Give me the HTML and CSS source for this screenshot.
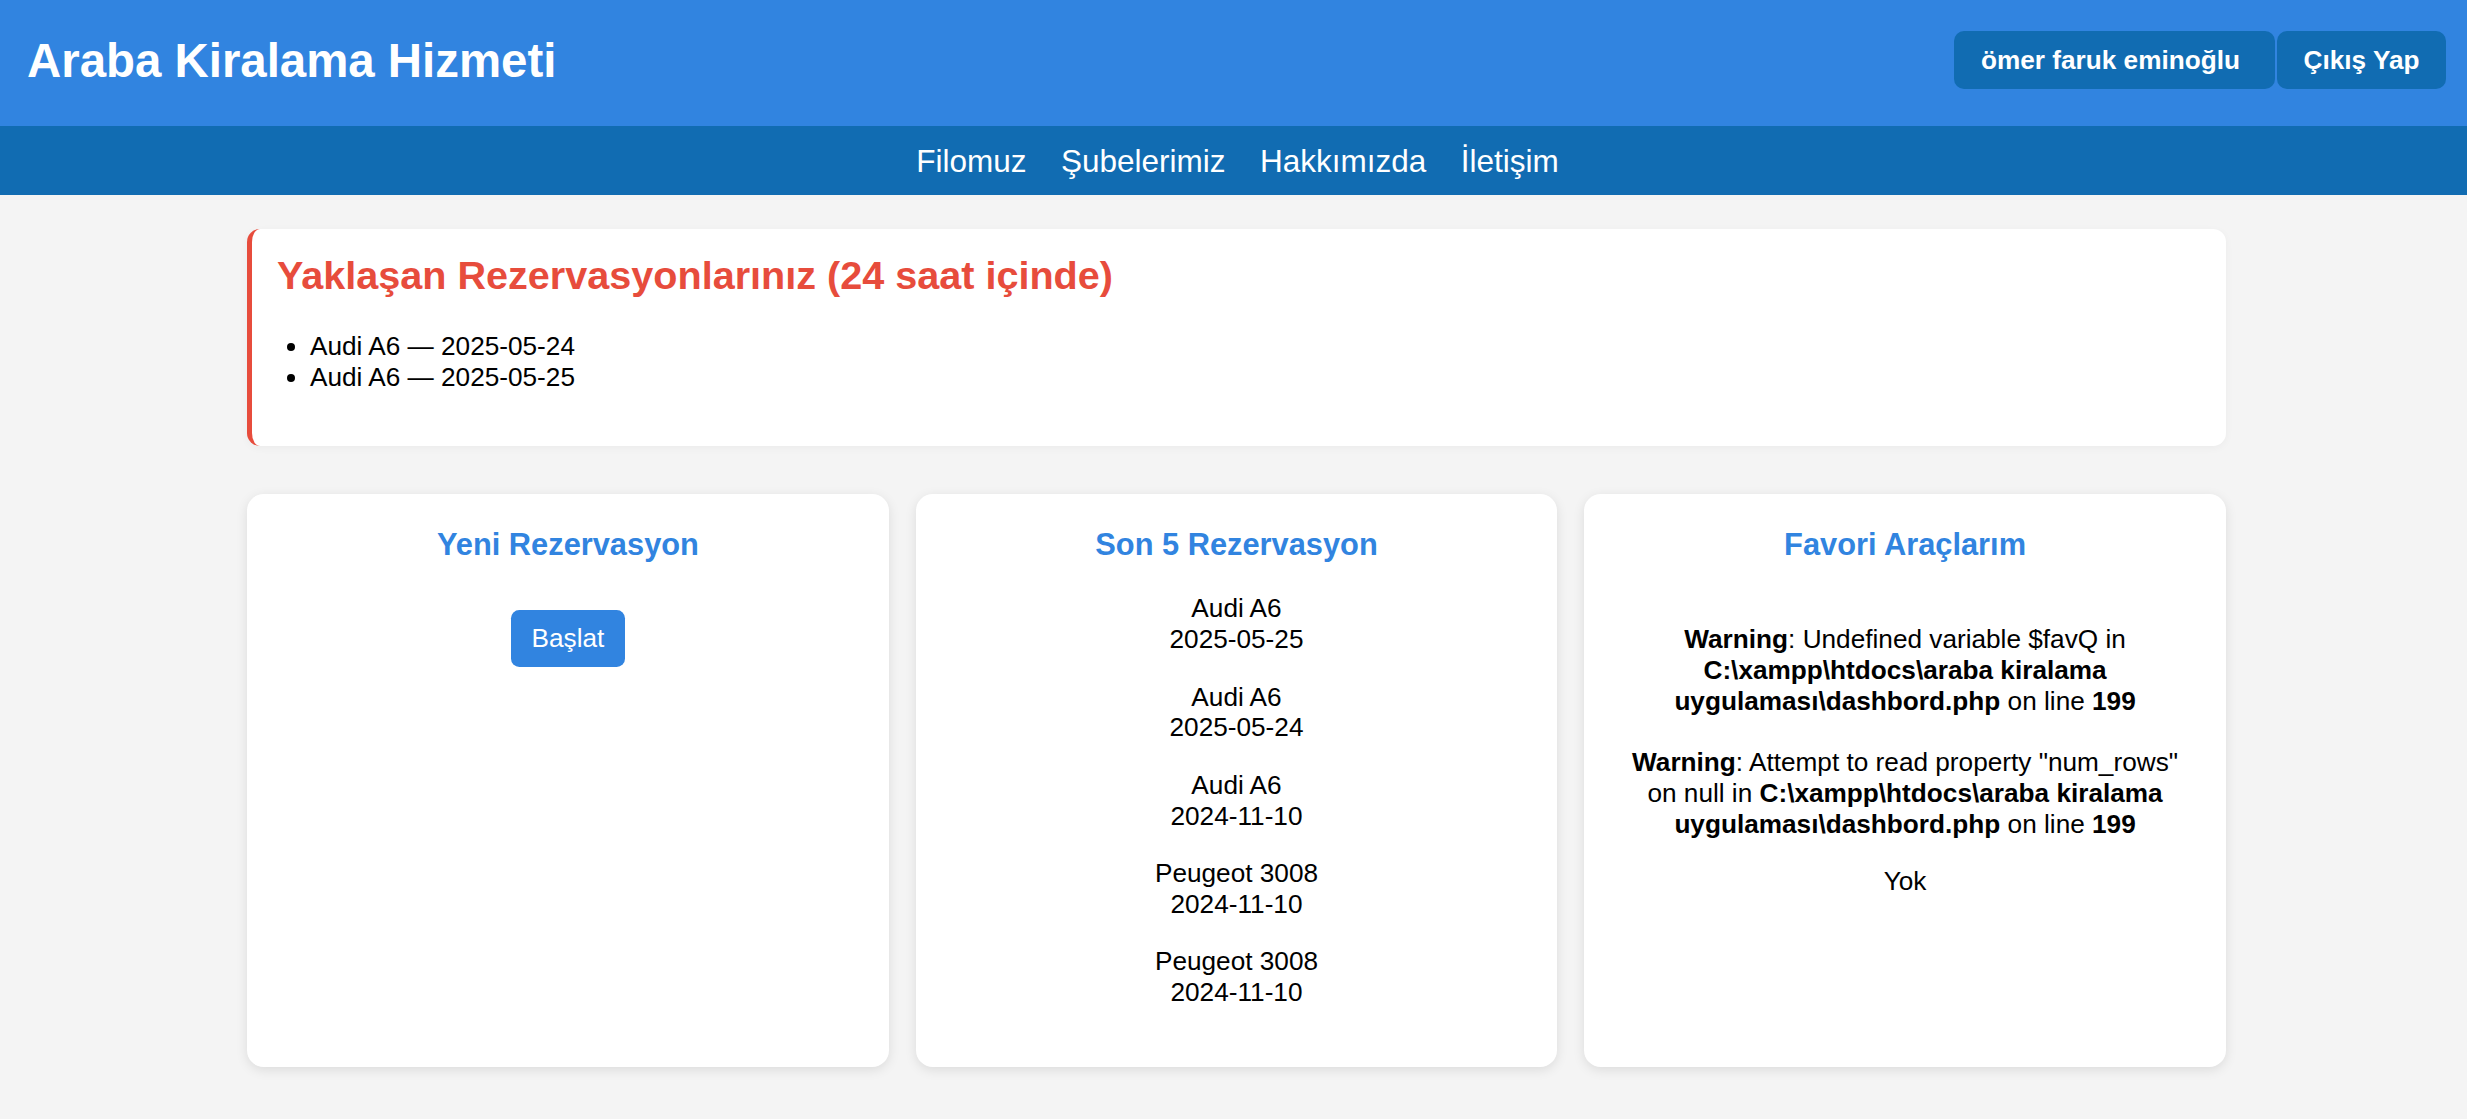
FILE: index.html
```html
<!DOCTYPE html>
<html lang="tr">
<head>
<meta charset="utf-8">
<title>Araba Kiralama Hizmeti</title>
<link rel="stylesheet" href="styles.css">
</head>
<body>
<header class="topbar">
  <h1 class="brand">Araba Kiralama Hizmeti</h1>
  <div class="user-actions">
    <a class="pill pill-user" href="#">ömer faruk eminoğlu</a>
    <a class="pill" href="#">Çıkış Yap</a>
  </div>
</header>
<nav class="mainnav">
  <a href="#">Filomuz</a>
  <a href="#">Şubelerimiz</a>
  <a href="#">Hakkımızda</a>
  <a href="#">İletişim</a>
</nav>
<main class="container">
  <section class="alert">
    <h2>Yaklaşan Rezervasyonlarınız (24 saat içinde)</h2>
    <ul>
      <li>Audi A6 — 2025-05-24</li>
      <li>Audi A6 — 2025-05-25</li>
    </ul>
  </section>
  <div class="cards">
    <div class="card">
      <h3>Yeni Rezervasyon</h3>
      <p><a class="btn" href="#">Başlat</a></p>
    </div>
    <div class="card">
      <h3>Son 5 Rezervasyon</h3>
      <p>Audi A6<br>2025-05-25</p>
      <p>Audi A6<br>2025-05-24</p>
      <p>Audi A6<br>2024-11-10</p>
      <p>Peugeot 3008<br>2024-11-10</p>
      <p>Peugeot 3008<br>2024-11-10</p>
    </div>
    <div class="card">
      <h3>Favori Araçlarım</h3>
      <br><b>Warning</b>: Undefined variable $favQ in <b>C:\xampp\htdocs\araba kiralama uygulaması\dashbord.php</b> on line <b>199</b><br>
      <br><b>Warning</b>: Attempt to read property "num_rows" on null in <b>C:\xampp\htdocs\araba kiralama uygulaması\dashbord.php</b> on line <b>199</b><br>
      <p>Yok</p>
    </div>
  </div>
</main>
</body>
</html>
```
FILE: styles.css
```css
* {
  box-sizing: border-box;
}

body {
  margin: 0;
  background: #f4f4f4;
  font-family: "Liberation Sans", Arial, sans-serif;
  font-size: 26.2px;
  line-height: 30.8px;
  color: #000;
}

.topbar {
  height: 126px;
  background: #3184e0;
  color: #fff;
  display: flex;
  align-items: center;
  justify-content: space-between;
  padding: 0 21px 6px 27px;
}

.brand {
  margin: 0;
  font-size: 47.4px;
  line-height: 55px;
  font-weight: bold;
}

.user-actions {
  display: flex;
  gap: 2px;
}

.pill {
  background: #116cb2;
  color: #fff;
  font-weight: bold;
  text-decoration: none;
  padding: 13.2px 26.5px;
  border-radius: 10px;
}

.pill-user {
  padding-left: 27px;
  padding-right: 35px;
}

.mainnav {
  background: #116cb2;
  display: flex;
  justify-content: center;
  gap: 34.5px;
  padding: 16.5px 0 16.5px 8px;
}

.mainnav a {
  color: #fff;
  text-decoration: none;
  font-size: 31.5px;
  line-height: 36px;
}

.container {
  width: 1979px;
  margin: 34px 0 0 247px;
  padding-bottom: 40px;
}

.alert {
  background: #fff;
  border-left: 5px solid #e74c3c;
  border-radius: 13px;
  padding: 23px 25px 27px;
  margin-bottom: 48px;
  box-shadow: 0 2px 8px rgba(0, 0, 0, 0.04);
}

.alert h2 {
  margin: 0 0 33px;
  color: #e74c3c;
  font-size: 39.6px;
  line-height: 46px;
}

.alert ul {
  margin: 0 0 26.67px;
  padding-left: 33px;
}

.cards {
  display: grid;
  grid-template-columns: repeat(3, 1fr);
  gap: 26.7px;
}

.card {
  background: #fff;
  border-radius: 16.7px;
  padding: 33px 33px 32px;
  text-align: center;
  box-shadow: 0 3px 12px rgba(0, 0, 0, 0.1);
}

.card h3 {
  margin: 0 0 31px;
  color: #3184e0;
  font-size: 30.8px;
  line-height: 35px;
}

.card p {
  margin: 26.67px 0;
}

.btn {
  display: inline-block;
  margin-top: 16.7px;
  background: #3184e0;
  color: #fff;
  padding: 13.2px 20.5px;
  border-radius: 8.3px;
  text-decoration: none;
}
```
